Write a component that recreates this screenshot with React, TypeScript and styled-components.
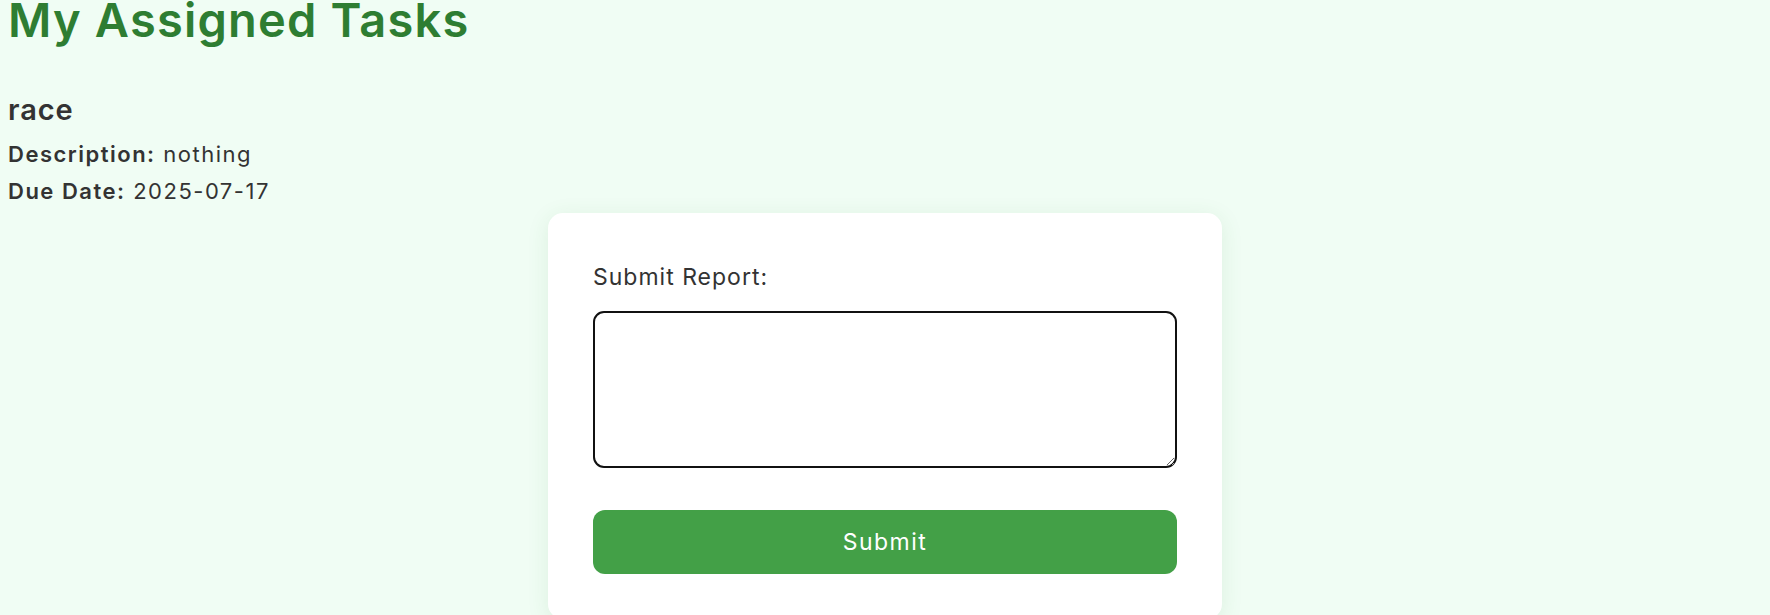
import React from "react";
import styled, { createGlobalStyle } from "styled-components";

const GlobalStyle = createGlobalStyle`
  html, body {
    margin: 0;
    padding: 0;
    background: #f0fdf4;
  }
  body {
    font-family: Inter, "Open Sans", "Noto Sans", sans-serif;
    color: #333333;
  }
  * { box-sizing: border-box; }
`;

const Page = styled.div`
  padding: 0 8px;
  min-height: 615px;
`;

const Title = styled.h1`
  margin: 0;
  font-size: 47px;
  line-height: 40px;
  font-weight: 600;
  letter-spacing: 1.2px;
  color: #2e7d32;
`;

const TaskName = styled.h3`
  margin: 52px 0 12px;
  font-size: 29px;
  line-height: 36px;
  font-weight: 600;
  letter-spacing: 0.9px;
  color: #333333;
`;

const InfoLine = styled.p<{ $gap?: number }>`
  margin: 0 0 ${(p) => p.$gap ?? 0}px;
  font-size: 22px;
  line-height: 28px;
  font-weight: 400;
  letter-spacing: 1.5px;
  color: #333333;

  strong {
    font-weight: 600;
  }
`;

const Card = styled.form`
  width: 674px;
  margin: 8px auto 0;
  padding: 48px 45px 45px;
  background: #ffffff;
  border-radius: 15px;
  box-shadow: 0 4px 22px rgba(46, 125, 50, 0.1);
  display: flex;
  flex-direction: column;
`;

const Label = styled.label`
  font-size: 23px;
  line-height: 32px;
  font-weight: 400;
  letter-spacing: 1px;
  color: #333333;
  margin-bottom: 18px;
`;

const ReportInput = styled.textarea`
  width: 100%;
  height: 157px;
  border: 2px solid #111111;
  border-radius: 11px;
  padding: 10px;
  font-family: inherit;
  font-size: 16px;
  background: #ffffff;
  margin: 0 0 42px;
  display: block;
  outline: none;
`;

const SubmitButton = styled.button`
  width: 100%;
  height: 64px;
  border: none;
  border-radius: 12px;
  background: #43a047;
  color: #ffffff;
  font-family: inherit;
  font-size: 23px;
  font-weight: 400;
  letter-spacing: 1.5px;
  cursor: pointer;
`;

export default function App() {
  return (
    <>
      <GlobalStyle />
      <Page>
        <Title>My Assigned Tasks</Title>
        <TaskName>race</TaskName>
        <InfoLine $gap={9}>
          <strong>Description:</strong> nothing
        </InfoLine>
        <InfoLine>
          <strong>Due Date:</strong> 2025-07-17
        </InfoLine>
        <Card onSubmit={(e) => e.preventDefault()}>
          <Label htmlFor="report">Submit Report:</Label>
          <ReportInput id="report" />
          <SubmitButton type="submit">Submit</SubmitButton>
        </Card>
      </Page>
    </>
  );
}
